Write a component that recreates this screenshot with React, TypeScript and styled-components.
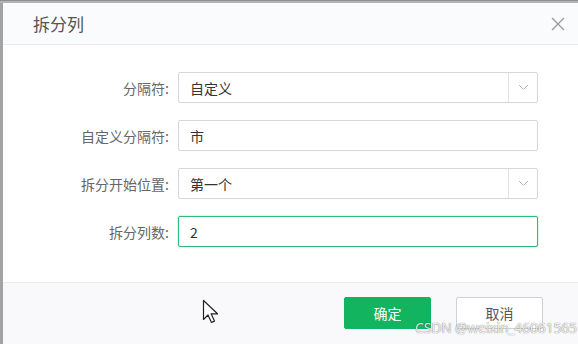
import styled, { createGlobalStyle } from 'styled-components'

const GlobalStyle = createGlobalStyle`
  html, body {
    margin: 0;
    padding: 0;
    background: #9c9c9c;
  }
  body {
    font-family: "Noto Sans CJK SC", "Liberation Sans", sans-serif;
  }
`

const Page = styled.div`
  position: relative;
  width: 578px;
  height: 344px;
  overflow: hidden;
  padding: 3px 0 0 3px;
  box-sizing: border-box;
  background: linear-gradient(#8e8e8e 0 1px, #b3b3b3 1px 3px, transparent 3px), #a3a3a3;
`

const Dialog = styled.div`
  width: 600px;
  height: 360px;
  display: flex;
  flex-direction: column;
  background: #fff;
`

const Header = styled.div`
  height: 42px;
  flex: none;
  display: flex;
  align-items: center;
  justify-content: space-between;
  padding: 0 0 0 30px;
  box-sizing: border-box;
  background: #fafbfd;
  border-bottom: 1px solid #ececf0;
`

const Title = styled.h3`
  margin: 0;
  font-size: 17px;
  font-weight: 400;
  color: #555;
  line-height: 1;
`

const CloseButton = styled.button`
  width: 22px;
  height: 22px;
  padding: 0;
  margin-right: 34px;
  border: none;
  background: transparent;
  display: flex;
  align-items: center;
  justify-content: center;
  cursor: pointer;
`

const Body = styled.div`
  height: 237px;
  flex: none;
  display: flex;
  flex-direction: column;
  gap: 17px;
  padding-top: 27px;
  box-sizing: border-box;
  background: #fff;
`

const Row = styled.div`
  display: flex;
  align-items: center;
  height: 31px;
`

const Label = styled.label`
  width: 175px;
  padding-right: 9px;
  box-sizing: border-box;
  text-align: right;
  font-size: 14px;
  color: #666;
`

const Field = styled.div<{ $focused?: boolean }>`
  width: 360px;
  height: 31px;
  box-sizing: border-box;
  display: flex;
  align-items: center;
  border: 1px solid ${(p) => (p.$focused ? '#2ebd78' : '#d6d6dc')};
  box-shadow: ${(p) => (p.$focused ? '0 0 2px rgba(46, 189, 120, 0.55)' : 'none')};
  border-radius: 2px;
  background: #fff;
`

const Value = styled.span`
  flex: 1;
  padding-left: 11px;
  font-size: 14px;
  color: #333;
`

const Arrow = styled.span`
  width: 28px;
  height: 100%;
  border-left: 1px solid #e2e2e6;
  display: flex;
  align-items: center;
  justify-content: center;
`

const Footer = styled.div`
  flex: 1;
  display: flex;
  gap: 25px;
  padding: 14px 0 0 341px;
  box-sizing: border-box;
  background: #f9f9fb;
  border-top: 1px solid #ececef;
`

const Button = styled.button<{ $primary?: boolean }>`
  width: 87px;
  height: 32px;
  border-radius: 2px;
  font-family: inherit;
  font-size: 14px;
  cursor: pointer;
  border: 1px solid ${(p) => (p.$primary ? '#12b45f' : '#cfcfd4')};
  background: ${(p) => (p.$primary ? '#12b45f' : '#fff')};
  color: ${(p) => (p.$primary ? '#fff' : '#555')};
`

const Watermark = styled.div`
  position: absolute;
  left: 415px;
  top: 318px;
  font-family: "Noto Sans", "Liberation Sans", sans-serif;
  font-size: 14px;
  letter-spacing: -0.2px;
  color: rgba(255, 255, 255, 0.9);
  text-shadow: 0 0 1px rgba(0, 0, 0, 0.45), 0 0 1px rgba(0, 0, 0, 0.3);
  white-space: nowrap;
`

const Cursor = styled.svg`
  position: absolute;
  left: 202px;
  top: 299px;
`

function Chevron() {
  return (
    <svg width="11" height="7" viewBox="0 0 11 7">
      <path d="M1 1l4.5 4.5L10 1" fill="none" stroke="#b8b8be" strokeWidth="1" />
    </svg>
  )
}

function SelectField({ value }: { value: string }) {
  return (
    <Field>
      <Value>{value}</Value>
      <Arrow>
        <Chevron />
      </Arrow>
    </Field>
  )
}

export default function App() {
  return (
    <>
      <GlobalStyle />
      <Page>
        <Dialog>
          <Header>
            <Title>拆分列</Title>
            <CloseButton>
              <svg width="14" height="14" viewBox="0 0 14 14">
                <path d="M1 1l12 12M13 1L1 13" stroke="#9a9a9a" strokeWidth="1.3" />
              </svg>
            </CloseButton>
          </Header>
          <Body>
            <Row>
              <Label>分隔符:</Label>
              <SelectField value="自定义" />
            </Row>
            <Row>
              <Label>自定义分隔符:</Label>
              <Field>
                <Value>市</Value>
              </Field>
            </Row>
            <Row>
              <Label>拆分开始位置:</Label>
              <SelectField value="第一个" />
            </Row>
            <Row>
              <Label>拆分列数:</Label>
              <Field $focused>
                <Value>2</Value>
              </Field>
            </Row>
          </Body>
          <Footer>
            <Button $primary>确定</Button>
            <Button>取消</Button>
          </Footer>
        </Dialog>
        <Watermark>CSDN @weixin_46061565</Watermark>
        <Cursor width="18" height="26" viewBox="0 0 18 26">
          <path
            d="M1.5 1.5v19l4.5-4.5 3.5 7.5 3-1.4-3.4-7.3h6.4z"
            fill="#fff"
            stroke="#222"
            strokeWidth="1.2"
            strokeLinejoin="round"
          />
        </Cursor>
      </Page>
    </>
  )
}
